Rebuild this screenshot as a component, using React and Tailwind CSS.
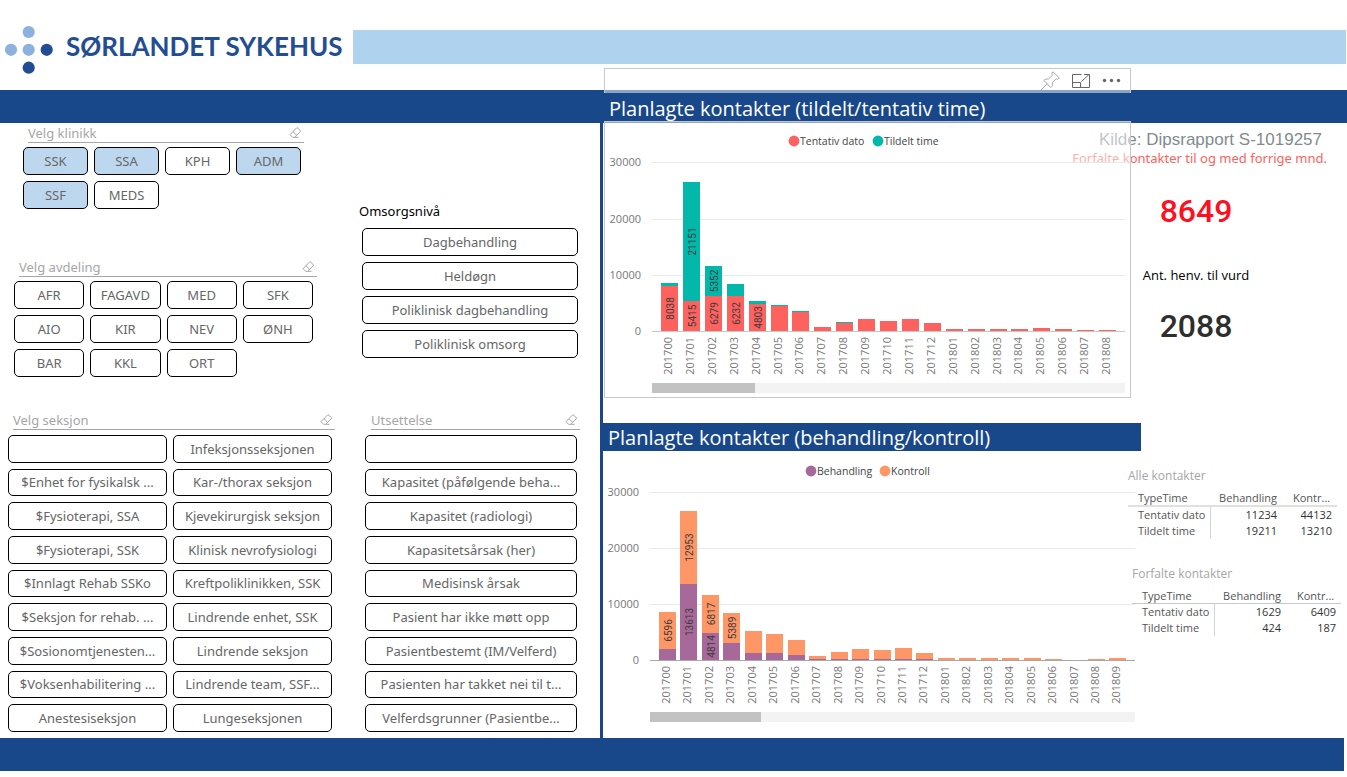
import React from "react";

const klinikker = [
  ["SSK", true],
  ["SSA", true],
  ["KPH", false],
  ["ADM", true],
  ["SSF", true],
  ["MEDS", false],
];

const avdelinger = ["AFR", "FAGAVD", "MED", "SFK", "AIO", "KIR", "NEV", "ØNH", "BAR", "KKL", "ORT"];

const omsorg = ["Dagbehandling", "Heldøgn", "Poliklinisk dagbehandling", "Poliklinisk omsorg"];

const seksjoner = [
  "",
  "$Enhet for fysikalsk ...",
  "$Fysioterapi, SSA",
  "$Fysioterapi, SSK",
  "$Innlagt Rehab SSKo",
  "$Seksjon for rehab. ...",
  "$Sosionomtjenesten...",
  "$Voksenhabilitering ...",
  "Anestesiseksjon",
  "Infeksjonsseksjonen",
  "Kar-/thorax seksjon",
  "Kjevekirurgisk seksjon",
  "Klinisk nevrofysiologi",
  "Kreftpoliklinikken, SSK",
  "Lindrende enhet, SSK",
  "Lindrende seksjon",
  "Lindrende team, SSF...",
  "Lungeseksjonen",
];

const utsettelser = [
  "",
  "Kapasitet (påfølgende beha...",
  "Kapasitet (radiologi)",
  "Kapasitetsårsak (her)",
  "Medisinsk årsak",
  "Pasient har ikke møtt opp",
  "Pasientbestemt (IM/Velferd)",
  "Pasienten har takket nei til t...",
  "Velferdsgrunner (Pasientbe...",
];

const perioder = [
  "201700", "201701", "201702", "201703", "201704", "201705", "201706", "201707",
  "201708", "201709", "201710", "201711", "201712", "201801", "201802", "201803",
  "201804", "201805", "201806", "201807", "201808", "201809",
];

const timer = [
  [8038, 560], [5415, 21151], [6279, 5352], [6232, 2130], [4803, 500], [4450, 200], [3450, 130],
  [700, 0], [1400, 200], [2100, 0], [1800, 0], [2100, 0], [1400, 0], [350, 0], [350, 0],
  [350, 0], [350, 0], [500, 0], [350, 0], [200, 0], [180, 0],
];

const behandlinger = [
  [2000, 6596], [13613, 12953], [4814, 6817], [2950, 5389], [1250, 3950], [1250, 3400], [900, 2700],
  [150, 600], [200, 1250], [200, 1800], [200, 1600], [200, 1950], [150, 1100], [50, 350], [50, 350],
  [50, 350], [50, 350], [50, 350], [0, 200], [0, 60], [0, 200], [0, 400],
];

function Eraser() {
  return (
    <svg viewBox="0 0 13 13" className="h-[13px] w-[13px]" fill="none" stroke="#a6a6a6" aria-hidden="true">
      <path d="M8 1.5 11.8 5.2 5.6 11.3H3.6L1 8.7Z M3.9 5.6 7.8 9.4 M5.6 11.3H9.5" strokeLinejoin="round" />
    </svg>
  );
}

function SlicerHeader({ title, className }) {
  return (
    <div className={"flex h-5 items-center justify-between border-b border-[#a6a6a6] pr-0.5 " + className}>
      <h3 className="font-['Noto_Sans',sans-serif] text-[13px] leading-5 text-[#a6a6a6]">{title}</h3>
      <button type="button" aria-label={"Fjern valg: " + title}>
        <Eraser />
      </button>
    </div>
  );
}

function Tile({ label, selected = false }) {
  return (
    <button
      type="button"
      aria-pressed={selected}
      aria-label={label || "(tom)"}
      className={
        "min-h-[27px] min-w-0 overflow-hidden whitespace-nowrap rounded-[5px] border border-black font-['Noto_Sans',sans-serif] text-[13px] leading-[18px] text-[#666] " +
        (selected ? "bg-[#bdd7ee]" : "bg-white")
      }
    >
      {label}
    </button>
  );
}

function StackedChart({ width, height, left, right, base, unit, first, step, data, colors, minLabel, legend, legendY, axis, thumb, title }) {
  const y = (v) => base - v * unit;
  return (
    <svg viewBox={`0 0 ${width} ${height}`} className="block h-auto w-full" role="img" aria-label={title}>
      {legend.map((l) => (
        <g key={l.name}>
          <circle cx={l.x} cy={legendY} r="5.4" fill={l.color} />
          <text x={l.x + 6} y={legendY + 4} fontSize="10.5" fill="#444">{l.name}</text>
        </g>
      ))}
      {[10000, 20000, 30000].map((v) => (
        <line key={v} x1={left} x2={right} y1={Math.round(y(v)) + 0.5} y2={Math.round(y(v)) + 0.5} stroke="#e9e9e9" />
      ))}
      {[0, 10000, 20000, 30000].map((v) => (
        <text key={v} x={left - 11} y={y(v) + 4} fontSize="11" textAnchor="end" fill="#777">{v}</text>
      ))}
      <line x1={left} x2={right} y1={base + 0.5} y2={base + 0.5} stroke={axis} />
      {data.map(([a, b], i) => {
        const x = Math.round(first + i * step);
        const ya = Math.round(y(a));
        const yb = Math.round(y(a + b));
        const label = (v, top, bottom) =>
          v >= minLabel && (
            <text
              transform={`translate(${x + 13} ${(top + bottom) / 2}) rotate(-90)`}
              textAnchor="middle"
              fontSize="10"
              fontFamily="Roboto, sans-serif"
              fill="#3c3c3c"
            >
              {v}
            </text>
          );
        return (
          <g key={perioder[i]}>
            <rect x={x} y={ya} width="17" height={base - ya} fill={colors[0]} />
            <rect x={x} y={yb} width="17" height={ya - yb} fill={colors[1]} />
            {label(a, ya, base)}
            {label(b, yb, ya)}
            <text transform={`translate(${x + 11} ${base + 6}) rotate(-90)`} textAnchor="end" fontSize="11" fill="#777">
              {perioder[i]}
            </text>
          </g>
        );
      })}
      <rect x={left} y={base + 52} width={right - left} height="10" fill="#f3f3f3" />
      <rect x={left} y={base + 52} width={thumb} height="10" fill="#c2c2c2" />
    </svg>
  );
}

function Matrix({ title, rows, className, rule }) {
  return (
    <section className={className}>
      <h3 className="text-[12px] leading-4 text-[#a6a6a6]">{title}</h3>
      <table className="mt-[7px] w-[209px] table-fixed text-[11px] leading-4 text-[#333]">
        <thead>
          <tr className={"text-left leading-[14px] text-[#555] " + rule}>
            <th className="w-[82px] pl-[10px] font-normal">TypeTime</th>
            <th className="w-[72px] whitespace-nowrap pr-[5px] text-right font-normal">Behandling</th>
            <th className="pl-[11px] font-normal">Kontr...</th>
          </tr>
        </thead>
        <tbody>
          {rows.map((r) => (
            <tr key={r[0]}>
              <th className="whitespace-nowrap border-r border-[#d4d4d4] pl-[10px] text-left font-normal text-[#555]">{r[0]}</th>
              <td className="pr-[5px] text-right">{r[1]}</td>
              <td className="pr-[5px] text-right">{r[2]}</td>
            </tr>
          ))}
        </tbody>
      </table>
    </section>
  );
}

function VisualToolbar() {
  return (
    <div className="absolute -top-[22px] left-px right-[216px] flex h-[25px] items-center justify-end gap-[11px] border border-b-0 border-[#c8c8c8] bg-white/50 pr-2">
      <button type="button" aria-label="Fest visualobjekt">
        <svg viewBox="0 0 20 20" className="h-5 w-5" fill="none" stroke="#a8a8a8" aria-hidden="true">
          <path d="M12.8 0.8 19.3 6.8 17.6 8.2 16 7.8 12.4 11.8C13 13.6 12.4 15.2 10.8 16.6L3.8 9.4C5.2 8 6.8 7.6 8.4 8.2L12.4 4.2 11.8 2.4Z M7 13 0.8 19" />
        </svg>
      </button>
      <button type="button" aria-label="Fokusmodus">
        <svg viewBox="0 0 20 20" className="h-5 w-5" fill="none" stroke="#666" aria-hidden="true">
          <path d="M10.5 3.5H1.5V16.5H18.5V8 M1.5 11.5H9.5V16.5 M10.5 10.5 18 3.5 M13 3.5H18.5V8.5" />
        </svg>
      </button>
      <button type="button" aria-label="Flere alternativer">
        <svg viewBox="0 0 20 20" className="h-5 w-5" fill="#666" aria-hidden="true">
          <circle cx="2.5" cy="9.5" r="1.7" />
          <circle cx="9.5" cy="9.5" r="1.7" />
          <circle cx="16.5" cy="9.5" r="1.7" />
        </svg>
      </button>
    </div>
  );
}

export default function App() {
  return (
    <div className="flex min-h-screen flex-col bg-white pb-[6px] font-['Open_Sans','Noto_Sans',sans-serif]">
      <header className="flex h-[90px] items-start">
        <div className="flex w-[353px] items-center pl-1 pt-[25px]">
          <svg viewBox="0 0 50 50" className="h-[50px] w-[50px]" aria-hidden="true">
            <circle cx="24.7" cy="7" r="6.1" fill="#8cb1df" />
            <circle cx="7" cy="24.8" r="6.1" fill="#8cb1df" />
            <circle cx="24.7" cy="24.8" r="6.1" fill="#8cb1df" />
            <circle cx="42.7" cy="24.8" r="6.1" fill="#234d92" />
            <circle cx="24.7" cy="42.7" r="6.1" fill="#234d92" />
          </svg>
          <h1 className="whitespace-nowrap pb-2 pl-3 font-['Lato',sans-serif] text-[26px] font-bold leading-8 text-[#234d92]">
            SØRLANDET SYKEHUS
          </h1>
        </div>
        <div className="mr-px mt-[30px] h-[34px] flex-1 bg-[#afd2ef]" />
      </header>

      <div className="grid grid-cols-[603fr_744fr] bg-[#19488a]">
        <div />
        <div className="relative">
          <VisualToolbar />
          <h2 className="h-[33px] pl-[6px] pt-[5px] text-[20px] leading-7 text-white">Planlagte kontakter (tildelt/tentativ time)</h2>
        </div>
      </div>

      <main className="grid flex-1 grid-cols-[603fr_744fr]">
        <div className="grid grid-cols-[345fr_255fr] border-r-[3px] border-[#19488a] pb-[6px]">
          <div className="flex flex-col">
            <section className="h-[134px] pl-[23px]">
              <SlicerHeader title="Velg klinikk" className="ml-[5px] mr-[41px]" />
              <div className="mr-[44px] mt-1 grid auto-rows-[28px] grid-cols-4 gap-1.5">
                {klinikker.map(([label, on]) => (
                  <Tile key={label} label={label} selected={on} />
                ))}
              </div>
            </section>
            <section className="h-[153px] pl-[14px]">
              <SlicerHeader title="Velg avdeling" className="ml-[5px] mr-[28px]" />
              <div className="mr-[32px] mt-1 grid auto-rows-[28px] grid-cols-4 gap-1.5">
                {avdelinger.map((label) => (
                  <Tile key={label} label={label} />
                ))}
              </div>
            </section>
            <section className="flex flex-1 flex-col pl-2">
              <SlicerHeader title="Velg seksjon" className="ml-[5px] mr-[10px]" />
              <div className="mr-[13px] mt-[5px] grid flex-1 grid-flow-col grid-cols-2 grid-rows-9 gap-1.5">
                {seksjoner.map((label) => (
                  <Tile key={label} label={label} />
                ))}
              </div>
            </section>
          </div>

          <div className="flex flex-col">
            <section className="h-[287px] pl-[14px] pt-[78px]">
              <h3 className="font-['Noto_Sans',sans-serif] text-[13px] leading-5 text-black">Omsorgsnivå</h3>
              <div className="ml-[3px] mr-[22px] mt-[7px] grid auto-rows-[28px] gap-1.5">
                {omsorg.map((label) => (
                  <Tile key={label} label={label} />
                ))}
              </div>
            </section>
            <section className="flex flex-1 flex-col pl-5">
              <SlicerHeader title="Utsettelse" className="ml-[6px] mr-[20px]" />
              <div className="mr-[23px] mt-[5px] grid flex-1 grid-rows-9 gap-1.5">
                {utsettelser.map((label) => (
                  <Tile key={label} label={label} />
                ))}
              </div>
            </section>
          </div>
        </div>

        <div>
          <div className="grid grid-cols-[minmax(0,1fr)_216px]">
            <div className="relative z-10 -mt-[2px] ml-px border border-[#c8c8c8] bg-white/50">
              <StackedChart
                title="Planlagte kontakter (tildelt/tentativ time)"
                width={525}
                height={275}
                left={47}
                right={520}
                base={209}
                unit={0.005617}
                first={56}
                step={21.9}
                data={timer}
                colors={["#fd625e", "#01b8aa"]}
                minLabel={4500}
                legendY={19}
                legend={[
                  { name: "Tentativ dato", x: 189, color: "#fd625e" },
                  { name: "Tildelt time", x: 273, color: "#01b8aa" },
                ]}
                axis="#c8c8c8"
                thumb={103}
              />
            </div>
            <aside className="flex flex-col items-end whitespace-nowrap pt-[7px]">
              <p className="mr-[25px] font-['Liberation_Sans',sans-serif] text-[17px] leading-5 text-[#7f8c8d]">
                Kilde: Dipsrapport S-1019257
              </p>
              <p className="mr-[20px] font-['Noto_Sans',sans-serif] text-[13px] leading-4 text-[#fd625e]">
                Forfalte kontakter til og med forrige mnd.
              </p>
              <div className="flex w-[130px] flex-col items-center self-start pt-[25px]">
                <p className="font-['Roboto',sans-serif] text-[32px] font-medium leading-10 text-[#ff1020]">8649</p>
                <p className="pt-[34px] text-[13px] leading-5 text-black">Ant. henv. til vurd</p>
                <p className="pt-[21px] font-['Roboto',sans-serif] text-[32px] font-medium leading-10 text-[#2e2e2e]">2088</p>
              </div>
            </aside>
          </div>

          <div className="mt-[25px] grid grid-cols-[minmax(0,1fr)_206px]">
            <div>
              <h2 className="h-7 bg-[#19488a] pl-[5px] text-[20px] leading-[30px] text-white">Planlagte kontakter (behandling/kontroll)</h2>
              <StackedChart
                title="Planlagte kontakter (behandling/kontroll)"
                width={538}
                height={287}
                left={47}
                right={532}
                base={209}
                unit={0.0056}
                first={56}
                step={21.45}
                data={behandlinger}
                colors={["#a66999", "#fe9666"]}
                minLabel={4700}
                legendY={20}
                legend={[
                  { name: "Behandling", x: 208, color: "#a66999" },
                  { name: "Kontroll", x: 282, color: "#fe9666" },
                ]}
                axis="#a8a8a8"
                thumb={111}
              />
            </div>
            <div className="-ml-[13px] pt-[45px]">
              <Matrix
                title="Alle kontakter"
                rule="border-b-2 border-[#e0e0e0]"
                rows={[
                  ["Tentativ dato", "11234", "44132"],
                  ["Tildelt time", "19211", "13210"],
                ]}
              />
              <Matrix
                title="Forfalte kontakter"
                className="ml-1 mt-[27px]"
                rule="border-b border-[#c8c8c8]"
                rows={[
                  ["Tentativ dato", "1629", "6409"],
                  ["Tildelt time", "424", "187"],
                ]}
              />
            </div>
          </div>
        </div>
      </main>
      <footer className="mr-[3px] h-[33px] bg-[#19488a]" />
    </div>
  );
}
